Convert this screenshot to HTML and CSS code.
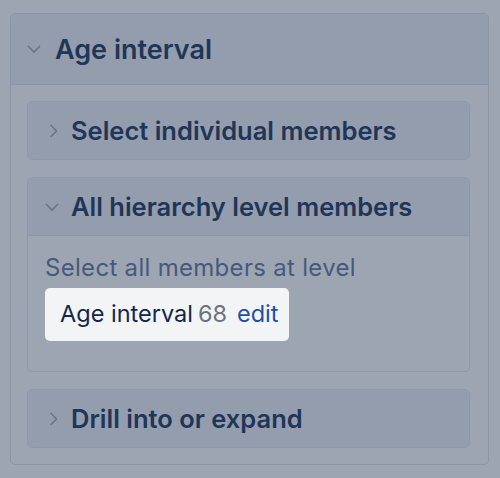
FILE: index.html
```html
<!DOCTYPE html>
<html lang="en">
  <head>
    <meta charset="UTF-8" />
    <meta name="viewport" content="width=device-width, initial-scale=1.0" />
    <title>Age interval</title>
    <link rel="stylesheet" href="styles.css">
  </head>

  <body>
    <div class="panel">
      <div class="panel-head">
        <svg class="chevron" width="14" height="14" viewBox="0 0 14 14"><path d="M1 4l6 6 6-6" /></svg>
        <h2>Age interval</h2>
      </div>
      <div class="panel-body">
        <div class="card">
          <div class="card-head">
            <svg class="chevron" width="14" height="14" viewBox="0 0 14 14"><path d="M5.5 1l6 6-6 6" /></svg>
            <h3>Select individual members</h3>
          </div>
        </div>

        <div class="card">
          <div class="card-head open">
            <svg class="chevron" width="14" height="14" viewBox="0 0 14 14"><path d="M1 4l6 6 6-6" /></svg>
            <h3>All hierarchy level members</h3>
          </div>
          <div class="card-body">
            <p class="hint">Select all members at level</p>
            <div class="chip">
              <span class="chip-name">Age interval</span>
              <span class="chip-count">68</span>
              <a class="chip-edit" href="#">edit</a>
            </div>
          </div>
        </div>

        <div class="card">
          <div class="card-head">
            <svg class="chevron" width="14" height="14" viewBox="0 0 14 14"><path d="M5.5 1l6 6-6 6" /></svg>
            <h3>Drill into or expand</h3>
          </div>
        </div>
      </div>
    </div>
  </body>
</html>
```

FILE: styles.css
```css
body {
  margin: 0;
  padding: 13px 11px 13px 10px;
  background-color: #9ea5b2;
  font-family: Inter, "Noto Sans", sans-serif;
  color: #1f3657;
}

.panel {
  border: 1px solid #8c95a5;
  border-radius: 5px;
}

.panel-head {
  display: flex;
  align-items: center;
  height: 70px;
  padding-left: 16px;
  background-color: #949dad;
  border-bottom: 1px solid #8c95a5;
  border-radius: 5px 5px 0 0;
}

.panel-head h2 {
  margin: 0 0 0 14px;
  font-size: 27px;
  font-weight: 600;
}

.chevron {
  flex: none;
  fill: none;
  stroke: #6a7487;
  stroke-width: 1.6;
}

.panel-body {
  display: flex;
  flex-direction: column;
  gap: 17px;
  padding: 16px 18px 16px 16px;
}

.card {
  border: 1px solid #8f98a8;
  border-radius: 5px;
}

.card-head {
  display: flex;
  align-items: center;
  height: 57px;
  padding-left: 17px;
  background-color: #949dad;
  border-radius: 5px;
}

.card-head.open {
  border-bottom: 1px solid #8f98a8;
  border-radius: 5px 5px 0 0;
}

.card-head h3 {
  margin: 0 0 0 12px;
  font-size: 25.5px;
  font-weight: 600;
}

.card-body {
  padding: 17px 18px 30px 17px;
}

.hint {
  margin: 0 0 6px;
  font-size: 24px;
  line-height: 29px;
  letter-spacing: 0.3px;
  color: #48597a;
}

.chip {
  display: inline-flex;
  align-items: baseline;
  gap: 5px;
  padding: 12px 11px 13px 15px;
  background-color: #f3f4f6;
  border-radius: 5px;
  font-size: 23.5px;
  line-height: 28px;
}

.chip-name {
  color: #14264a;
}

.chip-count {
  color: #6b7280;
}

.chip-edit {
  margin-left: 5px;
  color: #1d4fa6;
  text-decoration: none;
}
```
